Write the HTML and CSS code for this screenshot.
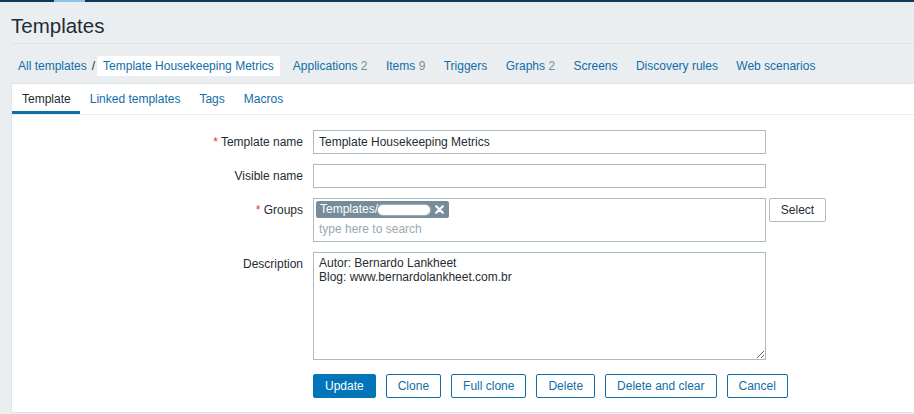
FILE: index.html
```html
<!DOCTYPE html>
<html lang="en">
<head>
<meta charset="utf-8">
<title>Templates</title>
<link rel="stylesheet" href="styles.css">
</head>
<body>
<div class="topbar"><span class="topbar-active"></span></div>
<main class="page">
  <header class="header">
    <h1 class="title">Templates</h1>
  </header>
  <nav class="subnav">
    <div class="crumbs">
      <a class="link" href="#">All templates</a>
      <span class="sep">/</span>
      <span class="crumb-current">Template Housekeeping Metrics</span>
    </div>
    <ul class="navlist">
      <li><a class="link" href="#">Applications</a> <span class="count">2</span></li>
      <li><a class="link" href="#">Items</a> <span class="count">9</span></li>
      <li><a class="link" href="#">Triggers</a></li>
      <li><a class="link" href="#">Graphs</a> <span class="count">2</span></li>
      <li><a class="link" href="#">Screens</a></li>
      <li><a class="link" href="#">Discovery rules</a></li>
      <li><a class="link" href="#">Web scenarios</a></li>
    </ul>
  </nav>
  <section class="panel">
    <ul class="tabs">
      <li class="tab tab-active">Template</li>
      <li class="tab"><a class="link" href="#">Linked templates</a></li>
      <li class="tab"><a class="link" href="#">Tags</a></li>
      <li class="tab"><a class="link" href="#">Macros</a></li>
    </ul>
    <form class="form">
      <label class="label"><span class="req">*</span> Template name</label>
      <div class="field"><input class="input" type="text" value="Template Housekeeping Metrics"></div>

      <label class="label">Visible name</label>
      <div class="field"><input class="input" type="text" value=""></div>

      <label class="label"><span class="req">*</span> Groups</label>
      <div class="field field-row">
        <div class="multiselect">
          <div class="tags">
            <span class="tag">Templates/<span class="redact"></span><svg class="tag-x" width="9" height="9" viewBox="0 0 9 9"><path d="M1.2 1.2 L7.8 7.8 M7.8 1.2 L1.2 7.8" stroke="#fff" stroke-width="2.2" stroke-linecap="round"/></svg></span>
          </div>
          <div class="ms-placeholder">type here to search</div>
        </div>
        <button class="btn btn-grey" type="button">Select</button>
      </div>

      <label class="label">Description</label>
      <div class="field"><textarea class="textarea">Autor: Bernardo Lankheet
Blog: www.bernardolankheet.com.br</textarea></div>

      <div class="spacer"></div>
      <div class="buttons">
        <button class="btn btn-primary" type="button">Update</button>
        <button class="btn btn-alt" type="button">Clone</button>
        <button class="btn btn-alt" type="button">Full clone</button>
        <button class="btn btn-alt" type="button">Delete</button>
        <button class="btn btn-alt" type="button">Delete and clear</button>
        <button class="btn btn-alt" type="button">Cancel</button>
      </div>
    </form>
  </section>
</main>
</body>
</html>
```

FILE: styles.css
```css
* { box-sizing: border-box; }
html, body { margin: 0; padding: 0; }
body {
  background: #ebeef0;
  font-family: "Liberation Sans", Arial, sans-serif;
  font-size: 12px;
  color: #1f2c33;
  width: 914px;
  height: 414px;
  overflow: hidden;
}
.topbar {
  height: 2px;
  background: #0e3a58;
  display: flex;
}
.topbar-active {
  display: block;
  margin-left: 54px;
  width: 31px;
  height: 2px;
  background: #8fc3ea;
}
.page { padding-left: 11px; }
.header {
  height: 42px;
  padding-top: 12px;
  border-bottom: 1px solid #dfe4e7;
}
.title {
  margin: 0;
  font-size: 20.5px;
  font-weight: normal;
  line-height: 24px;
  color: #1f2c33;
}
.subnav {
  display: flex;
  align-items: center;
  height: 40px;
  padding: 12px 0 7px 7px;
  border-bottom: 1px solid #dfe4e7;
}
.link { color: #0f6ea8; text-decoration: none; }
.crumbs { display: flex; align-items: center; line-height: 20px; }
.sep { margin: 0 2px 0 5px; color: #1f2c33; }
.crumb-current {
  background: #fff;
  color: #0f6ea8;
  padding: 0 6px;
  height: 20px;
  line-height: 20px;
  border-radius: 2px;
}
.navlist {
  list-style: none;
  margin: 0 0 0 13px;
  padding: 0;
  display: flex;
  gap: 18.4px;
  line-height: 20px;
}
.count { color: #768d99; }
.panel {
  background: #fff;
  border-left: 1px solid #dfe4e7;
  border-bottom: 1px solid #dfe4e7;
  height: 329px;
}
.tabs {
  list-style: none;
  margin: 0;
  padding: 0;
  display: flex;
  height: 31px;
  border-bottom: 1px solid #ebeef0;
}
.tab {
  padding: 3px 9px 0 10px;
  line-height: 24px;
  height: 30px;
  border-bottom: 3px solid transparent;
}
.tab-active { border-bottom-color: #0f6ea8; color: #1f2c33; }
.form {
  display: grid;
  grid-template-columns: 291px 1fr;
  column-gap: 10px;
  row-gap: 10px;
  padding-top: 15px;
}
.label {
  text-align: right;
  line-height: 24px;
  color: #1f2c33;
}
.req { color: #e33734; }
.field { display: flex; }
.field-row { align-items: flex-start; gap: 3px; }
.input {
  width: 453px;
  height: 24px;
  border: 1px solid #acbbc2;
  padding: 0 5px;
  font: inherit;
  color: #1f2c33;
  background: #fff;
  outline: none;
}
.multiselect {
  width: 453px;
  height: 44px;
  border: 1px solid #acbbc2;
  padding: 2px 2px 0 2px;
}
.tags { display: flex; height: 17px; }
.tag {
  display: inline-flex;
  align-items: center;
  height: 17px;
  background: #768d99;
  color: #fff;
  padding: 0 5px 0 4px;
  border-radius: 2px;
  line-height: 17px;
  width: 133px;
}
.redact {
  display: inline-block;
  width: 52px;
  height: 10px;
  background: #fff;
  border-radius: 5px;
  box-shadow: 0 0 2px #fff;
}
.tag-x { margin-left: auto; }
.ms-placeholder {
  color: #9aa9b1;
  line-height: 21px;
  padding-left: 3px;
  padding-top: 1px;
}
.textarea {
  width: 453px;
  height: 108px;
  border: 1px solid #acbbc2;
  padding: 3px 5px;
  font: inherit;
  line-height: 14px;
  color: #1f2c33;
  resize: both;
  outline: none;
}
.spacer { height: 4px; }
.buttons {
  display: flex;
  gap: 10px;
  padding-top: 4px;
}
.btn {
  height: 24px;
  padding: 0 11px;
  font: inherit;
  border-radius: 2px;
  cursor: pointer;
  line-height: 22px;
}
.btn-primary {
  background: #0275b8;
  border: 1px solid #0275b8;
  color: #fff;
}
.btn-alt {
  background: #fff;
  border: 1px solid #0f6ea8;
  color: #0f6ea8;
}
.btn-grey {
  background: #fff;
  border: 1px solid #acbbc2;
  color: #1f2c33;
  width: 57px;
  padding: 0;
}
```
